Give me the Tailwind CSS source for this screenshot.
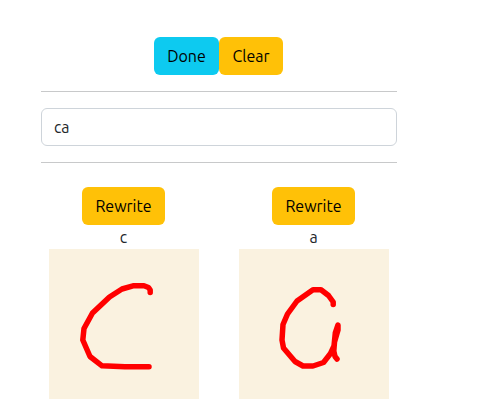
<!DOCTYPE html>
<html lang="en">
<head>
<meta charset="utf-8">
<title>Handwriting</title>
<script src="https://cdn.jsdelivr.net/npm/@tailwindcss/browser@4"></script>
</head>
<body class="bg-white font-[Ubuntu,'Noto_Sans',sans-serif] text-base text-[#212529]">
<main class="ml-[41px] w-[356px] pt-[37px]">
  <div class="flex justify-center pr-0.5">
    <button class="h-[38px] w-[65px] rounded-md bg-[#0dcaf0] pl-px text-center text-black">Done</button>
    <button class="h-[38px] w-16 rounded-md bg-[#ffc107] pl-px text-center text-black">Clear</button>
  </div>
  <hr class="my-4 border-t border-[#c8c9ca]">
  <input type="text" value="ca" class="block h-[38px] w-full rounded-md border border-[#ced4da] bg-white px-3 tracking-[-0.2px] outline-none">
  <hr class="mt-4 border-t border-[#c8c9ca]">
  <div class="mt-6 flex justify-between px-2">
    <section class="flex w-[150px] flex-col items-center">
      <div class="pr-px"><button class="block h-[38px] w-[83px] rounded-md bg-[#ffc107] text-center text-black">Rewrite</button></div>
      <p class="h-6 pr-px leading-6">c</p>
      <svg class="block size-[150px] bg-[#faf2e0]" viewBox="0 0 150 150" fill="none" stroke="#ff0000" stroke-width="5.5" stroke-linecap="round" stroke-linejoin="round">
        <path d="M101.2 43.5V41L99.5 38.5 95 36.8H84L73 40 60.5 48 43.5 64 35 79.5 33.8 91 41 107.5 53 116.8 76 117.7H100"/>
      </svg>
    </section>
    <section class="flex w-[150px] flex-col items-center">
      <div class="pr-px"><button class="block h-[38px] w-[83px] rounded-md bg-[#ffc107] text-center text-black">Rewrite</button></div>
      <p class="h-6 pr-px leading-6">a</p>
      <svg class="block size-[150px] bg-[#faf2e0]" viewBox="0 0 150 150" fill="none" stroke="#ff0000" stroke-width="5.5" stroke-linecap="round" stroke-linejoin="round">
        <path d="M94.2 55.5V53L89.5 46.5 82 40.8H74L58 52 48.5 65 44 75.5 43 91 44.5 99 56 112.5 64 117H74L84.5 113.5 91.5 104.5 95 97 96.3 84 99 76V81L95.5 93 94.8 102 96 107.5 98 110"/>
      </svg>
    </section>
  </div>
</main>
</body>
</html>
